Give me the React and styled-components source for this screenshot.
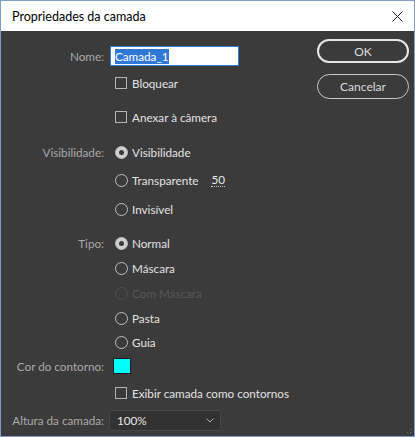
import styled, { createGlobalStyle } from "styled-components";

const GlobalStyle = createGlobalStyle`
  html, body {
    margin: 0;
    padding: 0;
    background: #3b3b3b;
  }
  * {
    box-sizing: border-box;
  }
`;

const Window = styled.div`
  width: 415px;
  height: 437px;
  border: 1px solid #7f9ccb;
  display: flex;
  flex-direction: column;
  font-family: Lato, "Noto Sans", sans-serif;
  font-size: 11.7px;
  background: #3b3b3b;
  overflow: hidden;
`;

const TitleBar = styled.div`
  height: 30px;
  background: #ffffff;
  display: flex;
  align-items: center;
  justify-content: space-between;
  padding: 0 11px 0 11px;
  color: #000;
  font-size: 12.5px;
`;

const CloseBtn = styled.div`
  width: 12px;
  height: 12px;
  display: flex;
  align-items: center;
  justify-content: center;
`;

const Body = styled.div`
  flex: 1;
  display: flex;
  position: relative;
`;

const Form = styled.div`
  flex: 1;
  display: flex;
  flex-direction: column;
  padding-top: 15px;
`;

const Row = styled.div`
  display: flex;
  align-items: center;
  height: 20px;
  margin-top: ${(p) => p.$gap || 0}px;
`;

const Label = styled.div`
  width: 104px;
  text-align: right;
  color: #a9a9a9;
  padding-right: 1px;
  white-space: nowrap;
`;

const Control = styled.div`
  display: flex;
  align-items: center;
  margin-left: ${(p) => p.$indent || 5}px;
  color: ${(p) => (p.$disabled ? "#585858" : "#e2e2e2")};
`;

const NameInput = styled.div`
  width: 129px;
  height: 20px;
  background: #ffffff;
  border: 1px solid #2d7ad0;
  display: flex;
  align-items: center;
  padding-left: 4px;
`;

const Selected = styled.span`
  background: #3178d6;
  color: #ffffff;
  line-height: 15px;
`;

const Box = styled.span`
  width: 12px;
  height: 12px;
  border: 1px solid #b4b4b4;
  margin-right: 5px;
  flex-shrink: 0;
`;

const Radio = styled.span`
  width: 13px;
  height: 13px;
  border-radius: 50%;
  border: 1px solid ${(p) => (p.$disabled ? "#505050" : "#bdbdbd")};
  background: ${(p) => (p.$checked ? "#cfcfcf" : "transparent")};
  margin-right: 4px;
  flex-shrink: 0;
  display: flex;
  align-items: center;
  justify-content: center;

  &::after {
    content: "";
    display: ${(p) => (p.$checked ? "block" : "none")};
    width: 5px;
    height: 5px;
    border-radius: 50%;
    background: #3b3b3b;
  }
`;

const Amount = styled.span`
  margin-left: 13px;
  border-bottom: 1px dotted #c8c8c8;
  line-height: 13px;
  color: #e8e8e8;
`;

const Swatch = styled.div`
  width: 18px;
  height: 16px;
  background: #00ffff;
  border: 1px solid #1c1c1c;
`;

const Select = styled.div`
  width: 112px;
  height: 21px;
  background: #323232;
  border: 1px solid #474747;
  border-radius: 2px;
  display: flex;
  align-items: center;
  justify-content: space-between;
  padding: 0 6px 0 7px;
  color: #e8e8e8;
`;

const Buttons = styled.div`
  width: 92px;
  margin-right: 5px;
  padding-top: 8px;
  display: flex;
  flex-direction: column;
  gap: 11px;
`;

const Button = styled.div`
  height: ${(p) => (p.$primary ? 24 : 25)}px;
  border: ${(p) => (p.$primary ? "2px solid #e6e6e6" : "1px solid #c6c6c6")};
  border-radius: 13px;
  display: flex;
  align-items: center;
  justify-content: center;
  color: #dcdcdc;
  font-size: 12px;
`;

const Grip = styled.div`
  position: absolute;
  right: 1px;
  bottom: 1px;
  width: 10px;
  height: 10px;
  background-image: radial-gradient(#6a6a6a 1px, transparent 1px);
  background-size: 3px 3px;
  clip-path: polygon(100% 0, 100% 100%, 0 100%);
`;

const Check = ({ children }) => (
  <>
    <Box />
    {children}
  </>
);

const Option = ({ checked, disabled, children }) => (
  <>
    <Radio $checked={checked} $disabled={disabled} />
    {children}
  </>
);

export default function App() {
  return (
    <Window>
      <GlobalStyle />
      <TitleBar>
        <span>Propriedades da camada</span>
        <CloseBtn>
          <svg width="11" height="11" viewBox="0 0 11 11">
            <path d="M0.5 0.5 L10.5 10.5 M10.5 0.5 L0.5 10.5" stroke="#1a1a1a" strokeWidth="1" />
          </svg>
        </CloseBtn>
      </TitleBar>
      <Body>
        <Form>
          <Row>
            <Label>Nome:</Label>
            <Control>
              <NameInput>
                <Selected>Camada_1</Selected>
              </NameInput>
            </Control>
          </Row>
          <Row $gap={7}>
            <Label />
            <Control $indent={10}>
              <Check>Bloquear</Check>
            </Control>
          </Row>
          <Row $gap={14}>
            <Label />
            <Control $indent={10}>
              <Check>Anexar à câmera</Check>
            </Control>
          </Row>
          <Row $gap={15}>
            <Label>Visibilidade:</Label>
            <Control $indent={10}>
              <Option checked>Visibilidade</Option>
            </Control>
          </Row>
          <Row $gap={8}>
            <Label />
            <Control $indent={10}>
              <Option>Transparente</Option>
              <Amount>50</Amount>
            </Control>
          </Row>
          <Row $gap={9}>
            <Label />
            <Control $indent={10}>
              <Option>Invisível</Option>
            </Control>
          </Row>
          <Row $gap={14}>
            <Label>Tipo:</Label>
            <Control $indent={10}>
              <Option checked>Normal</Option>
            </Control>
          </Row>
          <Row $gap={5}>
            <Label />
            <Control $indent={10}>
              <Option>Máscara</Option>
            </Control>
          </Row>
          <Row $gap={5}>
            <Label />
            <Control $indent={10} $disabled>
              <Option disabled>Com Máscara</Option>
            </Control>
          </Row>
          <Row $gap={5}>
            <Label />
            <Control $indent={10}>
              <Option>Pasta</Option>
            </Control>
          </Row>
          <Row $gap={4}>
            <Label />
            <Control $indent={10}>
              <Option>Guia</Option>
            </Control>
          </Row>
          <Row $gap={4}>
            <Label>Cor do contorno:</Label>
            <Control $indent={8}>
              <Swatch />
            </Control>
          </Row>
          <Row $gap={7}>
            <Label />
            <Control $indent={10}>
              <Check>Exibir camada como contornos</Check>
            </Control>
          </Row>
          <Row $gap={7}>
            <Label>Altura da camada:</Label>
            <Control $indent={4}>
              <Select>
                <span>100%</span>
                <svg width="8" height="5" viewBox="0 0 8 5">
                  <path d="M0.5 0.5 L4 4 L7.5 0.5" stroke="#b0b0b0" fill="none" strokeWidth="1" />
                </svg>
              </Select>
            </Control>
          </Row>
        </Form>
        <Buttons>
          <Button $primary>OK</Button>
          <Button>Cancelar</Button>
        </Buttons>
        <Grip />
      </Body>
    </Window>
  );
}
